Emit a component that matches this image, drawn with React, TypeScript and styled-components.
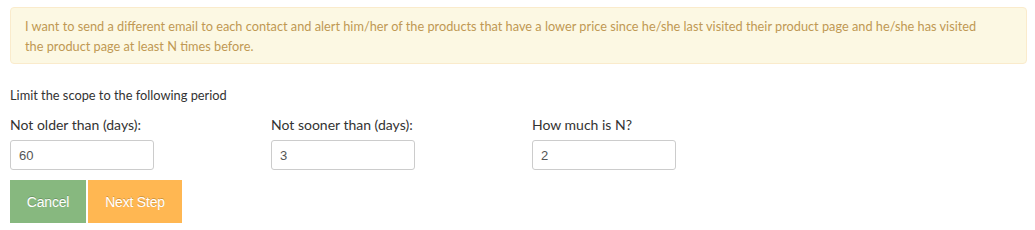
import styled, { createGlobalStyle } from 'styled-components';

const GlobalStyle = createGlobalStyle`
  body {
    margin: 0;
    background: #ffffff;
    font-family: Lato, "Open Sans", sans-serif;
  }
`;

const Page = styled.div`
  padding: 7px 8px 0 10px;
`;

const Alert = styled.div`
  background: #fcf8e3;
  border: 1px solid #faebcc;
  border-radius: 4px;
  color: #c09853;
  font-size: 12.75px;
  line-height: 20px;
  padding: 8px 40px 7px 14px;
`;

const Intro = styled.p`
  margin: 23px 0 0 0;
  font-size: 12.8px;
  line-height: 16px;
  color: #333;
`;

const Fields = styled.div`
  display: grid;
  grid-template-columns: repeat(3, 261px);
  margin-top: 13px;
`;

const Field = styled.div`
  display: flex;
  flex-direction: column;
`;

const Label = styled.label`
  font-size: 14px;
  color: #333;
  line-height: 17px;
`;

const Input = styled.input`
  box-sizing: border-box;
  width: 144px;
  height: 30px;
  margin-top: 7px;
  padding: 0 8px;
  border: 1px solid #ccc;
  border-radius: 3px;
  font-family: "Liberation Sans", Arial, sans-serif;
  font-size: 13px;
  color: #555;
  outline: none;
`;

const Actions = styled.div`
  display: flex;
  gap: 2px;
  margin-top: 10px;
`;

const Button = styled.button<{ $tone: 'cancel' | 'next' }>`
  height: 43px;
  width: ${({ $tone }) => ($tone === 'cancel' ? '76px' : '94px')};
  border: none;
  border-radius: 0;
  background: ${({ $tone }) => ($tone === 'cancel' ? '#87b87f' : '#ffb752')};
  color: #fff;
  font-family: "Liberation Sans", Arial, sans-serif;
  font-size: 14px;
  letter-spacing: -0.2px;
  text-shadow: 0 -1px 0 rgba(0, 0, 0, 0.2);
  cursor: pointer;
  padding: 0;
`;

const fields = [
  { label: 'Not older than (days):', value: '60' },
  { label: 'Not sooner than (days):', value: '3' },
  { label: 'How much is N?', value: '2' },
];

const App = () => (
  <>
    <GlobalStyle />
    <Page>
      <Alert>
        I want to send a different email to each contact and alert him/her of the products that have a lower price
        since he/she last visited their product page and he/she has visited the product page at least N times before.
      </Alert>
      <Intro>Limit the scope to the following period</Intro>
      <Fields>
        {fields.map((f) => (
          <Field key={f.label}>
            <Label>{f.label}</Label>
            <Input defaultValue={f.value} />
          </Field>
        ))}
      </Fields>
      <Actions>
        <Button $tone="cancel">Cancel</Button>
        <Button $tone="next">Next Step</Button>
      </Actions>
    </Page>
  </>
);

export default App;
